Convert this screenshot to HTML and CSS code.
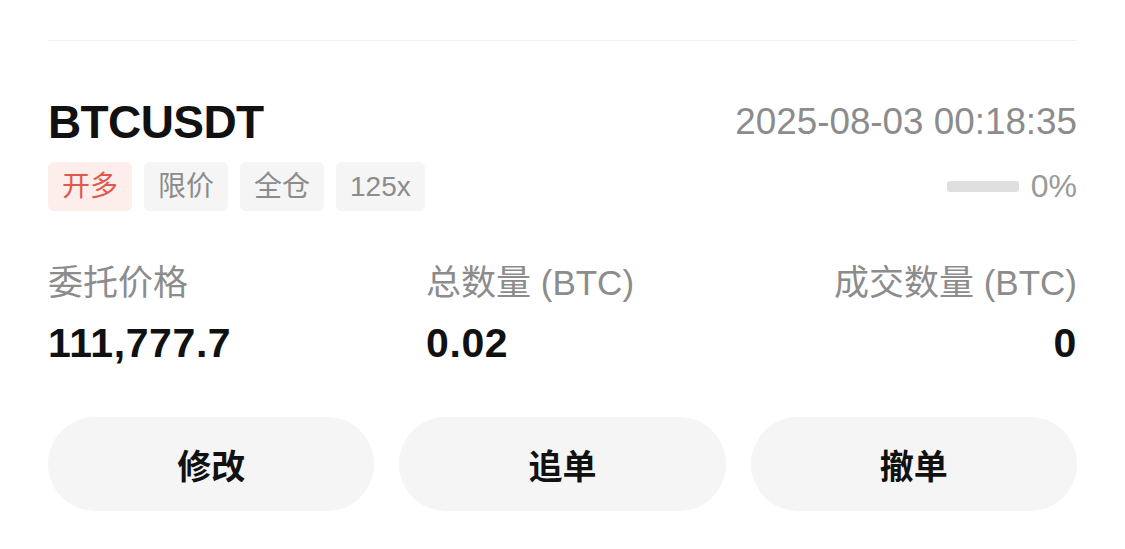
FILE: index.html
```html
<!DOCTYPE html>
<html lang="zh-CN">
<head>
  <meta charset="UTF-8" />
  <meta name="viewport" content="width=device-width, initial-scale=1.0" />
  <title>当前委托 – BTCUSDT</title>
  <link rel="stylesheet" href="styles.css">
</head>
<body>
  <div class="order">
    <div class="order-head">
      <h1 class="symbol">BTCUSDT</h1>
      <span class="time">2025-08-03 00:18:35</span>
    </div>

    <div class="order-tags">
      <div class="tags">
        <span class="tag tag-long">开多</span>
        <span class="tag">限价</span>
        <span class="tag">全仓</span>
        <span class="tag">125x</span>
      </div>
      <div class="progress">
        <div class="progress-bar"><div class="progress-fill" style="width: 0%"></div></div>
        <span class="progress-text">0%</span>
      </div>
    </div>

    <div class="order-info">
      <span class="label">委托价格</span>
      <span class="label">总数量 (BTC)</span>
      <span class="label right">成交数量 (BTC)</span>
      <span class="value">111,777.7</span>
      <span class="value">0.02</span>
      <span class="value right">0</span>
    </div>

    <div class="actions">
      <button>修改</button>
      <button>追单</button>
      <button>撤单</button>
    </div>
  </div>
</body>
</html>
```

FILE: styles.css
```css
:root {
  --text-color: #111111;
  --muted-color: #8c8c8c;
  --chip-bg: #f5f5f5;
  --long-color: #e0574c;
  --long-bg: #fdeeec;
}

body {
  margin: 0;
  padding-top: 40px;
  background: #ffffff;
  color: var(--text-color);
  font-family: "Liberation Sans", "Noto Sans CJK SC", sans-serif;
}

.order {
  margin: 0 48px;
  border-top: 1px solid #f2f2f2;
}

.order-head {
  display: flex;
  justify-content: space-between;
  align-items: baseline;
  margin-top: 53px;
}

.symbol {
  margin: 0;
  font-size: 46px;
  line-height: 56px;
  font-weight: bold;
  letter-spacing: -0.6px;
}

.time {
  font-size: 36.8px;
  color: var(--muted-color);
  position: relative;
  top: -4px;
}

.order-tags {
  display: flex;
  justify-content: space-between;
  align-items: center;
  margin-top: 12px;
}

.tags {
  display: flex;
  gap: 12px;
}

.tag {
  height: 49px;
  line-height: 49px;
  padding: 0 14px;
  border-radius: 6px;
  background: var(--chip-bg);
  color: var(--muted-color);
  font-size: 28px;
}

.tag-long {
  background: var(--long-bg);
  color: var(--long-color);
}

.progress {
  display: flex;
  align-items: center;
  gap: 12px;
}

.progress-bar {
  width: 72px;
  height: 11px;
  border-radius: 3px;
  background: #dddfe0;
  overflow: hidden;
}

.progress-fill {
  height: 100%;
  background: var(--long-color);
}

.progress-text {
  font-size: 32px;
  color: #9a9a9a;
}

.order-info {
  display: grid;
  grid-template-columns: 378px 1fr auto;
  row-gap: 16px;
  margin-top: 52px;
}

.label {
  font-size: 35px;
  line-height: 40px;
  color: var(--muted-color);
}

.value {
  font-size: 41px;
  line-height: 48px;
  font-weight: bold;
  letter-spacing: 0.6px;
}

.right {
  text-align: right;
}

.actions {
  display: flex;
  gap: 25px;
  margin-top: 50px;
}

.actions button {
  flex: 1;
  height: 94px;
  border: none;
  border-radius: 47px;
  background: var(--chip-bg);
  color: var(--text-color);
  font-family: "Noto Sans CJK SC", sans-serif;
  font-size: 34px;
  font-weight: bold;
  cursor: pointer;
}
```
